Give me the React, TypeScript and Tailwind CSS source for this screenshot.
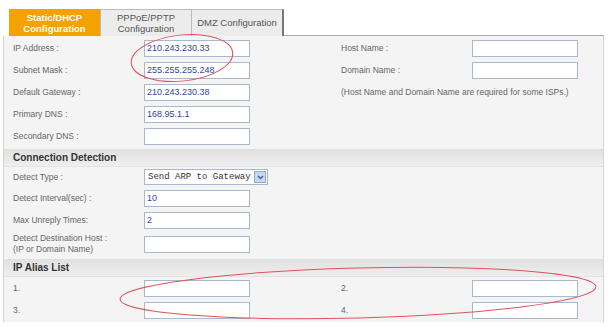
import type { ReactNode } from 'react';

const font = { fontFamily: '"Liberation Sans", Arial, sans-serif' };

function Field({ value }: { value?: string }) {
  return (
    <div className="w-[106px] h-[17px] bg-white border border-[#a9b8cc] px-[2px] flex items-center text-[9px] text-[#34469a] leading-none">
      {value}
    </div>
  );
}

function Row({ label, children, right, rightField, h = 'h-[22px]' }: { label: ReactNode; children?: ReactNode; right?: ReactNode; rightField?: boolean; h?: string }) {
  return (
    <div className={`flex items-center ${h}`}>
      <div className="w-[131px] text-[8.5px] text-[#666] leading-[11px]">{label}</div>
      <div className="w-[197px]">{children}</div>
      {right && <div className="w-[131px] text-[8.5px] text-[#666]">{right}</div>}
      {rightField && <Field />}
    </div>
  );
}

function Header({ title }: { title: string }) {
  return (
    <div className="-ml-[9px] h-[18px] mt-[2px] pl-[9px] flex items-center bg-gradient-to-b from-[#e0e0e0] to-[#efefef] border-b border-dotted border-[#e4e4e4] text-[10px] font-bold text-[#333]">
      {title}
    </div>
  );
}

export default function App() {
  return (
    <div className="w-[608px] h-[327px] bg-white relative overflow-hidden" style={font}>
      <div className="ml-[3px] w-[601px]">
        <div className="flex items-end pl-[6px] pt-[9px]">
          <div className="w-[91px] h-[27px] bg-[#f5a100] text-white font-bold text-[9.5px] leading-[11px] text-center flex items-center justify-center">
            Static/DHCP<br />Configuration
          </div>
          <div className="w-[91px] h-[27px] bg-[#ececec] border-t border-l border-[#bbb] text-[#555] text-[9.5px] leading-[11px] text-center flex items-center justify-center">
            PPPoE/PPTP<br />Configuration
          </div>
          <div className="w-[93px] h-[27px] bg-[#ececec] border-t border-l border-r-2 border-[#bbb] border-r-[#777] text-[#555] text-[9.5px] text-center flex items-center justify-center">
            DMZ Configuration
          </div>
          <div className="flex-1 border-b border-[#aaa]" />
        </div>
        <div className="bg-[#f4f4f4] border-l border-r border-[#d4d4d4] h-[286px] pl-[9px]">
          <div className="h-px" />
          <Row label="IP Address :" right="Host Name :" rightField>
            <Field value="210.243.230.33" />
          </Row>
          <Row label="Subnet Mask :" right="Domain Name :" rightField>
            <Field value="255.255.255.248" />
          </Row>
          <Row label="Default Gateway :" right={<span className="whitespace-nowrap">(Host Name and Domain Name are required for some ISPs.)</span>}>
            <Field value="210.243.230.38" />
          </Row>
          <Row label="Primary DNS :">
            <Field value="168.95.1.1" />
          </Row>
          <Row label="Secondary DNS :">
            <Field />
          </Row>
          <Header title="Connection Detection" />
          <Row label="Detect Type :" h="h-[20px]">
            <div className="w-[124px] h-[16px] bg-white border border-[#a9b8cc] flex items-center">
              <span className="flex-1 pl-[3px] text-[9px] text-[#333] leading-none whitespace-nowrap" style={{ fontFamily: '"Liberation Mono", "Courier New", monospace' }}>Send ARP to Gateway</span>
              <span className="w-[12px] h-[12px] mr-px bg-[#c8d8f4] border border-[#9ab] flex items-center justify-center">
                <svg width="7" height="5" viewBox="0 0 7 5"><path d="M1 1l2.5 2.5L6 1" stroke="#3a5ea8" strokeWidth="1.4" fill="none" /></svg>
              </span>
            </div>
          </Row>
          <Row label="Detect Interval(sec) :">
            <Field value="10" />
          </Row>
          <Row label="Max Unreply Times:">
            <Field value="2" />
          </Row>
          <Row label={<>Detect Destination Host :<br />(IP or Domain Name)</>} h="h-[26px]">
            <Field />
          </Row>
          <Header title="IP Alias List" />
          <Row label="1." right="2." rightField>
            <Field />
          </Row>
          <Row label="3." right="4." rightField>
            <Field />
          </Row>
        </div>
      </div>
      <svg className="absolute inset-0 pointer-events-none" width="608" height="327">
        <ellipse cx="182" cy="58" rx="51" ry="23" transform="rotate(-6 182 58)" fill="none" stroke="#e0525a" strokeWidth="1" />
        <ellipse cx="358" cy="293" rx="238" ry="25" transform="rotate(-1.5 358 293)" fill="none" stroke="#e0525a" strokeWidth="1" />
      </svg>
    </div>
  );
}
